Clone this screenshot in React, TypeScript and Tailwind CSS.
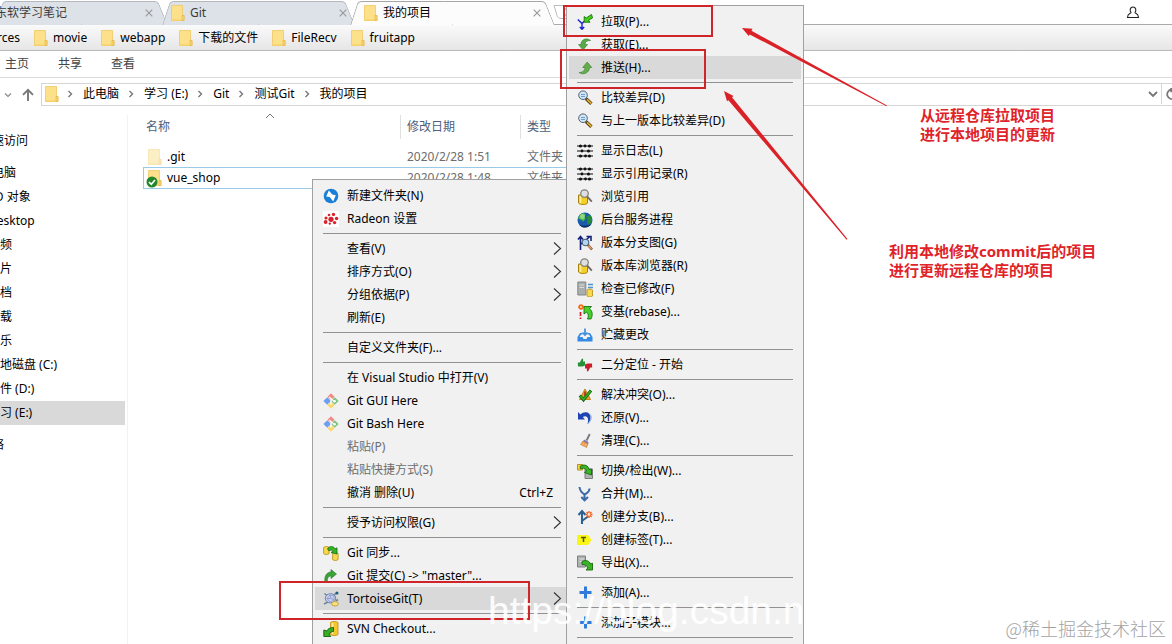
import type { ReactNode } from "react";

const Svg = ({ children, className = "size-4" }: { children: ReactNode; className?: string }) => (
  <svg viewBox="0 0 16 16" className={`${className} shrink-0`} fill="none" aria-hidden="true">
    {children}
  </svg>
);

const Folder = ({ faded = false }: { faded?: boolean }) => (
  <svg viewBox="0 0 14 16" className={faded ? "h-4 w-3.5 shrink-0 opacity-50" : "h-4 w-3.5 shrink-0"} aria-hidden="true">
    <path d="M.5.500h11v10H13v5H.5z" fill="#fde08a" stroke="#f0c862" strokeWidth=".8" />
    <path d="M.5 14.500h10V16H.5z" fill="#f6d06a" />
    <path d="M11 10.500h2v5h-2z" fill="#fbd871" stroke="#e3b549" strokeWidth=".7" />
  </svg>
);

const Magnifier = () => (
  <Svg>
    <path d="m9 8.600 5.400 5.200" stroke="#4b3a14" strokeWidth="3.400" />
    <path d="m10 9.400 4.400 4.200" stroke="#e5ad33" strokeWidth="1.800" />
    <circle cx="6" cy="5.200" r="4.300" fill="#cfe6f8" stroke="#54616f" strokeWidth="1" />
    <path d="M4 4.500h4M4 6.500h4" stroke="#6c9cc8" />
  </Svg>
);

const LogLines = () => (
  <Svg>
    <path d="M0 3h16M0 8h16M0 13h16" stroke="#111" strokeWidth="1.200" />
    <g fill="#111">
      <circle cx="3.500" cy="3" r="1.600" /><circle cx="8" cy="3" r="1.400" /><circle cx="12.500" cy="3" r="1.600" />
      <circle cx="5" cy="8" r="1.400" /><circle cx="11.500" cy="8" r="1.600" />
      <circle cx="3.500" cy="13" r="1.600" /><circle cx="8.500" cy="13" r="1.400" /><circle cx="12.500" cy="13" r="1.600" />
    </g>
  </Svg>
);

const RepoSearch = () => (
  <Svg>
    <path d="M1.500 6v8c1.500 2 8 2 9 0V6z" fill="#f5cf25" stroke="#a8830b" />
    <path d="M3.500 7v7" stroke="#fff29a" strokeWidth="1.600" />
    <circle cx="7.500" cy="4.600" r="3.800" fill="#dce0e2" stroke="#85827a" strokeWidth="1.300" />
    <path d="m10.300 7.600 4.500 5" stroke="#70685b" strokeWidth="1.800" />
  </Svg>
);

const Cylinder = ({ x, y }: { x: number; y: number }) => (
  <path d={`M${x} ${y}c1-1.2 5-1.2 5.5 0v6c-1 1.3-4.5 1.3-5.5 0z`} fill="#f9d94c" stroke="#b38d18" strokeWidth=".8" />
);

const icons: Record<string, ReactNode> = {
  newFolder: (
    <Svg>
      <circle cx="8" cy="8" r="7.300" fill="#1a7fd6" />
      <path d="M5.800 2.500 9.300 6.600l3.500.6-2.600 6.300-3.500-4.600-3.500-.4z" fill="#fff" />
    </Svg>
  ),
  radeon: (
    <Svg>
      <path d="M0 0h16v16H0z" fill="#fff" />
      <g fill="#d8222c">
        <circle cx="8" cy="8.300" r="2.600" /><circle cx="3" cy="7" r="1.600" /><circle cx="2.600" cy="11" r="1.900" />
        <circle cx="6" cy="4" r="1.300" /><circle cx="10.500" cy="3.400" r="1.700" /><circle cx="13.600" cy="7.500" r="1.700" />
        <circle cx="11.600" cy="11.600" r="1.700" /><circle cx="6.800" cy="12.600" r="1.200" />
      </g>
    </Svg>
  ),
  git: (
    <Svg>
      <path d="m8 .3 3.500 3.500L8 7.300 4.500 3.800z" fill="#f08a84" />
      <path d="M4.200 4.200 8 8l-3.800 3.800L.4 8z" fill="#6d9ff0" />
      <path d="M11.800 4.200 15.600 8l-3.800 3.800L8 8z" fill="#7cc47f" />
      <path d="m8 8.700 3.500 3.500L8 15.700l-3.500-3.500z" fill="#fbd76b" />
      <path d="m6.300 4 4.800 4.300M8 6v6" stroke="#fff" strokeWidth="1.100" />
      <circle cx="11.600" cy="8.200" r="1.300" fill="#fff" />
    </Svg>
  ),
  sync: (
    <Svg>
      <Cylinder x={0.6} y={2.5} />
      <Cylinder x={9.6} y={8.5} />
      <path d="M4.500 4C6 .8 11 .8 12 4l2-1.200V9L8 7.500l2-1.200C9.400 4.800 7 4.600 6 6z" fill="#35b526" stroke="#176c10" strokeWidth=".8" />
    </Svg>
  ),
  commit: (
    <Svg>
      <path d="M2 14C1 8 4 4 8 4V1.500L13.500 6 8 10.500V8C5.500 8 4 10 4.500 14z" fill="#3aa236" stroke="#287727" strokeWidth=".6" />
    </Svg>
  ),
  tortoise: (
    <Svg>
      <path d="M1.500 2.500 4 4.500M1 13l4-2M13 10l2-1.500" stroke="#6f8797" strokeWidth="1.600" />
      <ellipse cx="7.500" cy="7.300" rx="5.200" ry="4.600" fill="#c6d2ee" stroke="#6f7fae" />
      <path d="M4 7.500 7 4l4 1v4l-4 2zM7 4l1 3.500L4 7.500m4 0 3 1.500" stroke="#8696c4" strokeWidth=".8" />
      <path d="m11 4 2.500-2" stroke="#7a92a4" strokeWidth="2" />
      <circle cx="14" cy="2" r="1.500" fill="#1f5c80" />
      <ellipse cx="12" cy="12.800" rx="3.400" ry="2.200" fill="#fbe27f" stroke="#b8952e" strokeWidth=".8" />
    </Svg>
  ),
  svn: (
    <Svg>
      <path d="M7.500 1.500c1.500-1.500 6-1.500 7.500 0v12c-1.500 1.500-6 1.500-7.500 0z" fill="#f7c52d" stroke="#bd8b14" strokeWidth=".8" />
      <path d="M9.500 2v11" stroke="#fff09b" strokeWidth="1.500" />
      <path d="M10.500 6.500C7 6.500 4.500 8 4 10L.8 9v6.500h7L6 13c1-1.500 2.500-2.500 4.500-2.500z" fill="#37ae24" stroke="#175f0e" strokeWidth=".9" />
    </Svg>
  ),
  pull: (
    <Svg>
      <path d="M.8 5.500 5 9.500l3-3M5 9v6.300M2.800 13 5 15.300 7.200 13" stroke="#1822d2" strokeWidth="1.400" />
      <path d="m14.500.5 1 3.500-4 2.200 1.500 2H7.200V2.500l2 1.500z" fill="#46d01b" stroke="#16730b" strokeWidth=".9" />
    </Svg>
  ),
  fetch: (
    <Svg>
      <path d="M13.500 3.500C10 .5 4 2 4 7.500H1.500L6 13l4.500-5.500H8C8 5 10 3.300 13.500 3.500z" fill="#57aa45" stroke="#33782c" strokeWidth=".6" />
    </Svg>
  ),
  push: (
    <Svg>
      <path d="M2 12.500C6 15.500 12.500 13 12.500 7.500h2.300L10.200 2 5.700 7.500H8c0 3-2.500 5-6 5z" fill="#63ad4b" stroke="#397b30" strokeWidth=".6" />
    </Svg>
  ),
  diff: <Magnifier />,
  log: <LogLines />,
  repo: <RepoSearch />,
  daemon: (
    <Svg>
      <circle cx="8" cy="8" r="7.500" fill="#1a5cab" />
      <path d="M3 2.500C5.500.5 8 1 8.500 3L7 5l1.500 2L6 9.500 4.500 8 2 7 1 6z" fill="#46b946" />
      <path d="m10 4 3-1c2 2 2.500 5 1.500 7L12 13l-2-2 .5-3L9 6z" fill="#258b36" />
      <circle cx="5.500" cy="4.500" r="2.500" fill="#bff0a5" opacity=".6" />
      <path d="M2 12.500c3 4.500 10 4 12.800-1C11.500 14 6 14.500 2 12.500" fill="#0a2f65" />
    </Svg>
  ),
  graph: (
    <Svg>
      <path d="M3.500 15V2M1 4.500 3.500 1.500 6 4.500M4 9l8.500-7M9.500 1.500H14V6" stroke="#15227b" strokeWidth="1.600" />
      <circle cx="8.500" cy="7.500" r="3.300" fill="#b5d5ec" stroke="#46617c" strokeWidth="1.100" />
      <path d="m11 10 4 4.500" stroke="#7a4d2b" strokeWidth="2.600" />
      <path d="m11.500 10.500 3 3.300" stroke="#f1aa76" strokeWidth="1.200" />
    </Svg>
  ),
  check: (
    <Svg>
      <path d="M.8 1h8v13h-8z" fill="#aaaead" stroke="#838786" />
      <path d="M2.500 4h4.500M2.500 6.500h4.500" stroke="#d9dddd" />
      <path d="M11 3.500h5M11 6.500h5" stroke="#4c92cd" strokeWidth="1.300" />
      <Cylinder x={10} y={9} />
    </Svg>
  ),
  rebase: (
    <Svg>
      <path d="M4 0v6M1 3h6M2 1l4 4M6 1 2 5" stroke="#f26a18" strokeWidth="1.300" />
      <circle cx="4" cy="3" r="1" fill="#ffe49e" />
      <path d="M3.500 8v4m0 1.500v1.500" stroke="#d91a27" strokeWidth="1.700" />
      <path d="M7 2.500h7.500l-2 2.200c3 2.300 3.500 6.300 1.500 10.300h-3.500c1.500-3 1-5-1-7L7 10z" fill="#48d12b" stroke="#187312" strokeWidth=".9" />
    </Svg>
  ),
  stash: (
    <Svg>
      <path d="M3 6h2.500v1.500H4L2.500 10h3l1 2h3l1-2h3L12 7.500h-1.500V6H13l2.500 4v4.500H.5V10z" fill="#358ae5" />
      <path d="M8 1.500v6M5.500 5.500 8 8l2.500-2.500" stroke="#3f8fdd" strokeWidth="1.700" />
    </Svg>
  ),
  bisect: (
    <Svg>
      <path d="M.8 5.500h2L5 1.500l1.200.5-.2 2.500h2v4L5.500 9.500H1z" fill="#249137" />
      <path d="M15.200 10.500h-2L11 14.500l-1.200-.5.200-2.500H8v-4l2.500-1H15z" fill="#c91e2e" />
    </Svg>
  ),
  resolve: (
    <Svg>
      <path d="M8 2 13.500 12.500h-11z" fill="#f0a328" stroke="#c57f1c" />
      <path d="M8 4.500V9" stroke="#b12a1d" strokeWidth="1.600" />
      <path d="m2.800 8.500 3.700 4.300L14 3.500" stroke="#136411" strokeWidth="3" />
      <path d="m3.300 9 3.200 3.500L13.600 4" stroke="#34af24" strokeWidth="1.800" />
    </Svg>
  ),
  revert: (
    <Svg>
      <path d="M1 2v7.500h7L5.800 7C9.500 4.800 12.500 7.500 10.500 14 15.500 9.500 14 2 8.500 2.300 6.500 2.300 5 3 3.500 4.500z" fill="#1d43b4" />
      <path d="M10.800 13.800C15.500 9.500 14.500 5.500 12.500 4" stroke="#79a8e2" />
    </Svg>
  ),
  clean: (
    <Svg>
      <path d="m12.800 1-3.300 6.500" stroke="#7a7980" strokeWidth="1.900" />
      <path d="m7 6.500 4.500 2.500-.5 2.500-5-2.500z" fill="#7d78b8" />
      <path d="m6 8 5 2.800-1.500 3.700-6-3z" fill="#ef9c55" stroke="#b4783e" strokeWidth=".6" />
      <path d="m7 10-2 2.500M9 11l-1.200 2.500" stroke="#fbd19b" strokeWidth=".7" />
    </Svg>
  ),
  checkout: (
    <Svg>
      <path d="M8 6h7.500v9.500H8z" fill="#aeb2b0" stroke="#797e7c" />
      <path d="M.5 1.500h5v5.500h-5z" fill="#f7d83c" stroke="#b59117" />
      <path d="M3 3.500C7 .5 11.500 2.500 12 6.500L14.500 6v6L7.500 9.500l2-1.500C9 5.500 6.500 4.500 3.500 6z" fill="#38b625" stroke="#176410" strokeWidth=".9" />
    </Svg>
  ),
  merge: (
    <Svg>
      <path d="M2.500 1c.3 3.500 2 5.500 5 7.500V14M12.500 2.500c0 3-2 4.500-5 6M4.300 11l3.200 3.300L11 11" stroke="#3a6ba7" strokeWidth="2" />
    </Svg>
  ),
  branch: (
    <Svg>
      <path d="M5 15V3M1.500 6 5 2l3.500 4M5.500 11.500 11 7.500" stroke="#2c6193" strokeWidth="2.100" />
      <path d="M12 2v7M8.500 5.500h7M9.500 3l5 5M14.500 3l-5 5" stroke="#f05b25" strokeWidth="1.300" />
      <circle cx="12" cy="5.500" r="1.400" fill="#ffe5be" />
    </Svg>
  ),
  tag: (
    <Svg>
      <path d="M0 3h11l3.500 5-3.500 5H0z" fill="#fbf615" />
      <path d="M4 5.500h5M6.500 5.500V10" stroke="#4c5a16" strokeWidth="1.500" />
    </Svg>
  ),
  export: (
    <Svg>
      <path d="M.5 1h8v11h-8z" fill="#aeb2b1" stroke="#7c807f" />
      <path d="M2.500 4H7M2.500 6.500H7" stroke="#dee2e1" />
      <path d="M5 6.500c4-2 7.500-.5 8.500 2.500l2-.8V15H9l1.800-2C10 10.500 8.500 9.500 5 9.500z" fill="#3ab424" stroke="#1a6711" strokeWidth=".9" />
    </Svg>
  ),
  add: (
    <Svg>
      <path d="M7 1.500h3V6h4.500v3H10v4.500H7V9H2.500V6H7z" fill="#2f7bdc" />
    </Svg>
  ),
};

type Entry = { label: string; icon?: string; arrow?: boolean; key?: string; off?: boolean; on?: boolean } | null;

const contextItems: Entry[] = [
  { label: "新建文件夹(N)", icon: "newFolder" },
  { label: "Radeon 设置", icon: "radeon" },
  null,
  { label: "查看(V)", arrow: true },
  { label: "排序方式(O)", arrow: true },
  { label: "分组依据(P)", arrow: true },
  { label: "刷新(E)" },
  null,
  { label: "自定义文件夹(F)..." },
  null,
  { label: "在 Visual Studio 中打开(V)" },
  { label: "Git GUI Here", icon: "git" },
  { label: "Git Bash Here", icon: "git" },
  { label: "粘贴(P)", off: true },
  { label: "粘贴快捷方式(S)", off: true },
  { label: "撤消 删除(U)", key: "Ctrl+Z" },
  null,
  { label: "授予访问权限(G)", arrow: true },
  null,
  { label: "Git 同步...", icon: "sync" },
  { label: 'Git 提交(C) -> "master"...', icon: "commit" },
  { label: "TortoiseGit(T)", icon: "tortoise", arrow: true, on: true },
  null,
  { label: "SVN Checkout...", icon: "svn" },
];

const gitItems: Entry[] = [
  { label: "拉取(P)...", icon: "pull" },
  { label: "获取(E)...", icon: "fetch" },
  { label: "推送(H)...", icon: "push", on: true },
  null,
  { label: "比较差异(D)", icon: "diff" },
  { label: "与上一版本比较差异(D)", icon: "diff" },
  null,
  { label: "显示日志(L)", icon: "log" },
  { label: "显示引用记录(R)", icon: "log" },
  { label: "浏览引用", icon: "repo" },
  { label: "后台服务进程", icon: "daemon" },
  { label: "版本分支图(G)", icon: "graph" },
  { label: "版本库浏览器(R)", icon: "repo" },
  { label: "检查已修改(F)", icon: "check" },
  { label: "变基(rebase)...", icon: "rebase" },
  { label: "贮藏更改", icon: "stash" },
  null,
  { label: "二分定位 - 开始", icon: "bisect" },
  null,
  { label: "解决冲突(O)...", icon: "resolve" },
  { label: "还原(V)...", icon: "revert" },
  { label: "清理(C)...", icon: "clean" },
  null,
  { label: "切换/检出(W)...", icon: "checkout" },
  { label: "合并(M)...", icon: "merge" },
  { label: "创建分支(B)...", icon: "branch" },
  { label: "创建标签(T)...", icon: "tag" },
  { label: "导出(X)...", icon: "export" },
  null,
  { label: "添加(A)...", icon: "add" },
  null,
  { label: "添加子模块...", icon: "add" },
  null,
];

function MenuList({ items }: { items: Entry[] }) {
  return (
    <>
      {items.map((it, i) =>
        it === null ? (
          <div key={i} role="separator" className="flex h-[7px] shrink-0 items-center px-2">
            <div className="h-px w-full bg-[#919191]" />
          </div>
        ) : (
          <button
            key={i}
            role="menuitem"
            disabled={it.off}
            className={`flex h-[23px] w-full shrink-0 items-center gap-2 pr-1 pl-2 text-left text-black disabled:text-[#6d6d6d] ${it.on ? "bg-[#d9d9d9]" : ""}`}
          >
            <span className="size-4 shrink-0">{it.icon && icons[it.icon]}</span>
            <span className="grow whitespace-nowrap">{it.label}</span>
            {it.key && <span className="pr-3">{it.key}</span>}
            {it.arrow && (
              <Svg>
                <path d="m5 1.500 6.500 6L5 13.500" stroke="#333" strokeWidth="1.100" />
              </Svg>
            )}
          </button>
        ),
      )}
    </>
  );
}

const CloseGlyph = () => (
  <svg viewBox="0 0 8 8" className="size-2" aria-hidden="true">
    <path d="m.7.7 6.600 6.600M7.300.7.7 7.300" stroke="#9a9a9a" strokeWidth="1.200" />
  </svg>
);

function Tab({ label, active = false, folder = true, className }: { label: string; active?: boolean; folder?: boolean; className: string }) {
  const face = active
    ? "before:border-[#a6a6a6] before:bg-[#fcfcfc] after:border-[#a6a6a6] after:bg-[#fcfcfc] z-10"
    : "before:border-[#b4b8bc] before:bg-[#dce2e8] after:border-[#b4b8bc] after:bg-[#dce2e8] text-[#3c3c3c]";
  return (
    <div
      className={`relative flex h-[25px] shrink-0 items-center gap-[5px] before:absolute before:top-px before:bottom-0 before:left-1 before:w-1/2 before:-skew-x-[18deg] before:rounded-tl-[4px] before:border-t before:border-l before:content-[''] after:absolute after:top-px after:right-1 after:bottom-0 after:w-1/2 after:skew-x-[22deg] after:rounded-tr-[4px] after:border-t after:border-r after:content-[''] ${face} ${className}`}
    >
      {folder && <span className="relative z-10"><Folder /></span>}
      <button role="tab" aria-selected={active} className="relative z-10 grow text-left whitespace-nowrap">{label}</button>
      <button aria-label="关闭标签页" className="relative z-10"><CloseGlyph /></button>
    </div>
  );
}

const Crumb = () => (
  <svg viewBox="0 0 25 16" className="h-4 w-[25px] shrink-0" fill="none" aria-hidden="true">
    <path d="m10.500 5 3 3-3 3" stroke="#777" strokeWidth="1.400" />
  </svg>
);

const bookmarks = ["movie", "webapp", "下载的文件", "FileRecv", "fruitapp"];
const crumbs = ["此电脑", "学习 (E:)", "Git", "测试Git", "我的项目"];
const drives = ["3D 对象", "Desktop", "视频", "图片", "文档", "下载", "音乐", "本地磁盘 (C:)", "软件 (D:)", "学习 (E:)"];

export default function App() {
  return (
    <div className="relative flex h-screen flex-col overflow-hidden bg-white font-['Noto_Sans','Noto_Sans_CJK_SC',sans-serif] text-[12px] leading-4 text-black">
      <div role="tablist" className="flex h-[25px] shrink-0 border-b border-[#a9a9a9]">
        <Tab label="东软学习笔记" folder={false} className="-ml-[5px] w-[171px] pr-[13px]" />
        <Tab label="Git" className="-ml-1 w-[192px] pr-[7px] pl-[9px]" />
        <Tab label="我的项目" active className="-ml-1 w-[203px] pr-[12px] pl-[14px]" />
        <svg viewBox="0 0 30 24" className="h-6 w-[30px]" fill="none" aria-hidden="true">
          <path d="M1 5.500h25l4 13H8c-2 0-3-1-4-3z" stroke="#bbb" />
          <circle cx="15" cy="12" r="4" stroke="#e88" />
        </svg>
        <button aria-label="用户" className="mr-8 ml-auto">
          <svg viewBox="0 0 14 14" className="size-3.5" fill="none" aria-hidden="true">
            <path d="M5 7.500C3.500 5.500 4 2 7 2s3.500 3.500 2 5.500c0 1 3.500 1 3.500 5h-11c0-4 3.500-4 3.500-5z" stroke="#222" strokeWidth="1.100" />
          </svg>
        </button>
      </div>

      <nav aria-label="书签" className="flex h-[26px] shrink-0 items-center gap-[14px] border-b border-[#b9b9b9] bg-linear-to-b from-[#fafafa] to-[#e6e6e6]">
        <a href="#resources" className="flex w-5 shrink-0 justify-end">resources</a>
        {bookmarks.map((b) => (
          <a key={b} href={`#${b}`} className="flex shrink-0 items-center gap-[5px]">
            <Folder />
            {b}
          </a>
        ))}
      </nav>

      <div className="flex h-[27px] shrink-0 items-center gap-[29px] border-b border-[#dcdcdc] pl-[5px] text-[#444]">
        <button>主页</button>
        <button>共享</button>
        <button>查看</button>
      </div>

      <div className="flex shrink-0 items-center pt-[5px]">
        <div className="flex w-[41px] shrink-0 items-center gap-2 pl-1">
          <svg viewBox="0 0 8 8" className="size-2" fill="none" aria-hidden="true">
            <path d="m1 2.500 3 3 3-3" stroke="#888" strokeWidth="1.200" />
          </svg>
          <button aria-label="上一级">
            <Svg>
              <path d="M8 14V3M3 7.800 8 2.800l5 5" stroke="#777" strokeWidth="1.900" />
            </Svg>
          </button>
        </div>
        <div className="flex h-[23px] grow items-center border border-r-0 border-[#d5d5d5] pb-px pl-[3px]">
          <Folder />
          {crumbs.map((c) => (
            <span key={c} className="flex items-center first-of-type:-ml-px">
              <Crumb />
              <button className="whitespace-nowrap">{c}</button>
            </span>
          ))}
          <button aria-label="展开" className="mr-[3px] ml-auto">
            <svg viewBox="0 0 10 8" className="h-2 w-2.5" fill="none" aria-hidden="true">
              <path d="m1 2 4 4 4-4" stroke="#777" strokeWidth="1.900" />
            </svg>
          </button>
          <button aria-label="刷新" className="h-full w-[11px] overflow-hidden border-l border-[#d5d5d5] pl-[3px]">
            <Svg className="size-3.5">
              <path d="M12 4.500A5.500 5.500 0 1 0 13.500 9M7 1v4h6" stroke="#777" strokeWidth="2" />
            </Svg>
          </button>
        </div>
      </div>

      <div className="flex min-h-0 grow pt-[9px]">
        <nav aria-label="导航" className="flex w-[128px] shrink-0 flex-col border-r border-[#f2f2f2] pt-3.5">
          <a href="#quick" className="-ml-5 flex h-6 shrink-0 items-center">快速访问</a>
          <a href="#pc" className="mt-2 -ml-5 flex h-6 shrink-0 items-center">此电脑</a>
          {drives.map((d) => (
            <a key={d} href={`#${d}`} className={`-ml-3 flex h-6 shrink-0 items-center whitespace-nowrap ${d === "学习 (E:)" ? "mr-0.5 bg-[#d9d9d9]" : ""}`}>
              {d}
            </a>
          ))}
          <a href="#network" className="mt-2 -ml-5 flex h-6 shrink-0 items-center">网络</a>
        </nav>
        <main className="grow pl-[15px]">
          <table className="w-[600px] table-fixed border-separate border-spacing-0">
            <thead>
              <tr className="h-6 text-left text-[#4c607a]">
                <th className="relative w-[257px] pl-[3px] font-normal">
                  名称
                  <svg viewBox="0 0 10 6" className="absolute -top-0.5 left-[122px] h-1.5 w-2.5" fill="none" aria-hidden="true">
                    <path d="m1 5 4-4 4 4" stroke="#777" />
                  </svg>
                </th>
                <th className="w-[120px] border-l border-[#e0e0e0] pl-1.5 font-normal">修改日期</th>
                <th className="border-l border-[#e0e0e0] pl-1.5 font-normal">类型</th>
              </tr>
            </thead>
            <tbody className="text-[#6d6d6d]">
              <tr>
                <td className="pt-[7px] pl-[5px]">
                  <span className="flex h-[21px] items-center gap-[5px] text-black"><Folder faded />.git</span>
                </td>
                <td className="pt-[7px] pl-[7px]">2020/2/28 1:51</td>
                <td className="pt-[7px] pl-[7px]">文件夹</td>
              </tr>
              <tr>
                <td className="border-y border-l border-[#99cbe8] pl-1">
                  <span className="relative flex h-5 items-center gap-[5px] text-black">
                    <Folder />
                    vue_shop
                    <svg viewBox="0 0 12 12" className="absolute bottom-0 -left-0.5 size-3" fill="none" aria-hidden="true">
                      <circle cx="6" cy="6" r="5.500" fill="#22862a" />
                      <path d="m3 6 2.300 2.300L9 4" stroke="#fff" strokeWidth="1.700" />
                    </svg>
                  </span>
                </td>
                <td className="border-y border-[#99cbe8] pl-[7px]">2020/2/28 1:48</td>
                <td className="border-y border-[#99cbe8] pl-[7px]">文件夹</td>
              </tr>
            </tbody>
          </table>
        </main>
      </div>

      <div role="menu" className="absolute top-[179px] bottom-0 left-[312px] flex w-[258px] flex-col overflow-hidden border border-b-0 border-[#a0a0a0] bg-[#f1f1f1] py-1 pl-0.5">
        <MenuList items={contextItems} />
      </div>
      <div role="menu" className="absolute top-[5px] bottom-0 left-[566px] flex w-[238px] flex-col overflow-hidden border border-b-0 border-[#a0a0a0] bg-[#f1f1f1] px-0.5 py-1">
        <MenuList items={gitItems} />
      </div>

      <div className="absolute top-[5px] left-[563px] h-8 w-[150px] border-2 border-[#d0242b]" />
      <div className="absolute top-[49px] left-[560px] h-10 w-[146px] border-2 border-[#d0242b]" />
      <div className="absolute top-[581px] left-[279px] h-[39px] w-[251px] border-2 border-[#d0242b]" />

      <svg viewBox="0 0 150 215" className="pointer-events-none absolute top-[27px] left-[740px] h-[215px] w-[150px]" fill="#db2128" aria-hidden="true">
        <path d="m2 1 10.500.8-1 2L147 78.400l-.5.900L9.700 7.400l-1 1.600z" />
      </svg>
      <svg viewBox="0 0 130 155" className="pointer-events-none absolute top-[90px] left-[722px] h-[155px] w-[130px]" fill="#db2128" aria-hidden="true">
        <path d="m2 1 9.500 5-1.500 1.300L125.500 149l-.9.700L6.400 10.200 5 11.300z" />
      </svg>

      <p className="absolute top-[106px] left-[920px] text-[15px] leading-[19px] font-bold whitespace-nowrap text-[#df2329]">
        从远程仓库拉取项目<br />进行本地项目的更新
      </p>
      <p className="absolute top-[242px] left-[889px] text-[15px] leading-[19px] font-bold whitespace-nowrap text-[#df2329]">
        利用本地修改commit后的项目<br />进行更新远程仓库的项目
      </p>

      <p className="pointer-events-none absolute bottom-2.5 left-[488px] font-['Liberation_Sans',sans-serif] text-[39px] leading-[46px] whitespace-nowrap text-white/90">
        https://blog.csdn.n
      </p>
      <p className="absolute right-1.5 bottom-1 font-['Noto_Sans_CJK_SC',sans-serif] text-[18px] leading-6 font-light whitespace-nowrap text-[#a3a3a3]">
        @稀土掘金技术社区
      </p>
    </div>
  );
}
